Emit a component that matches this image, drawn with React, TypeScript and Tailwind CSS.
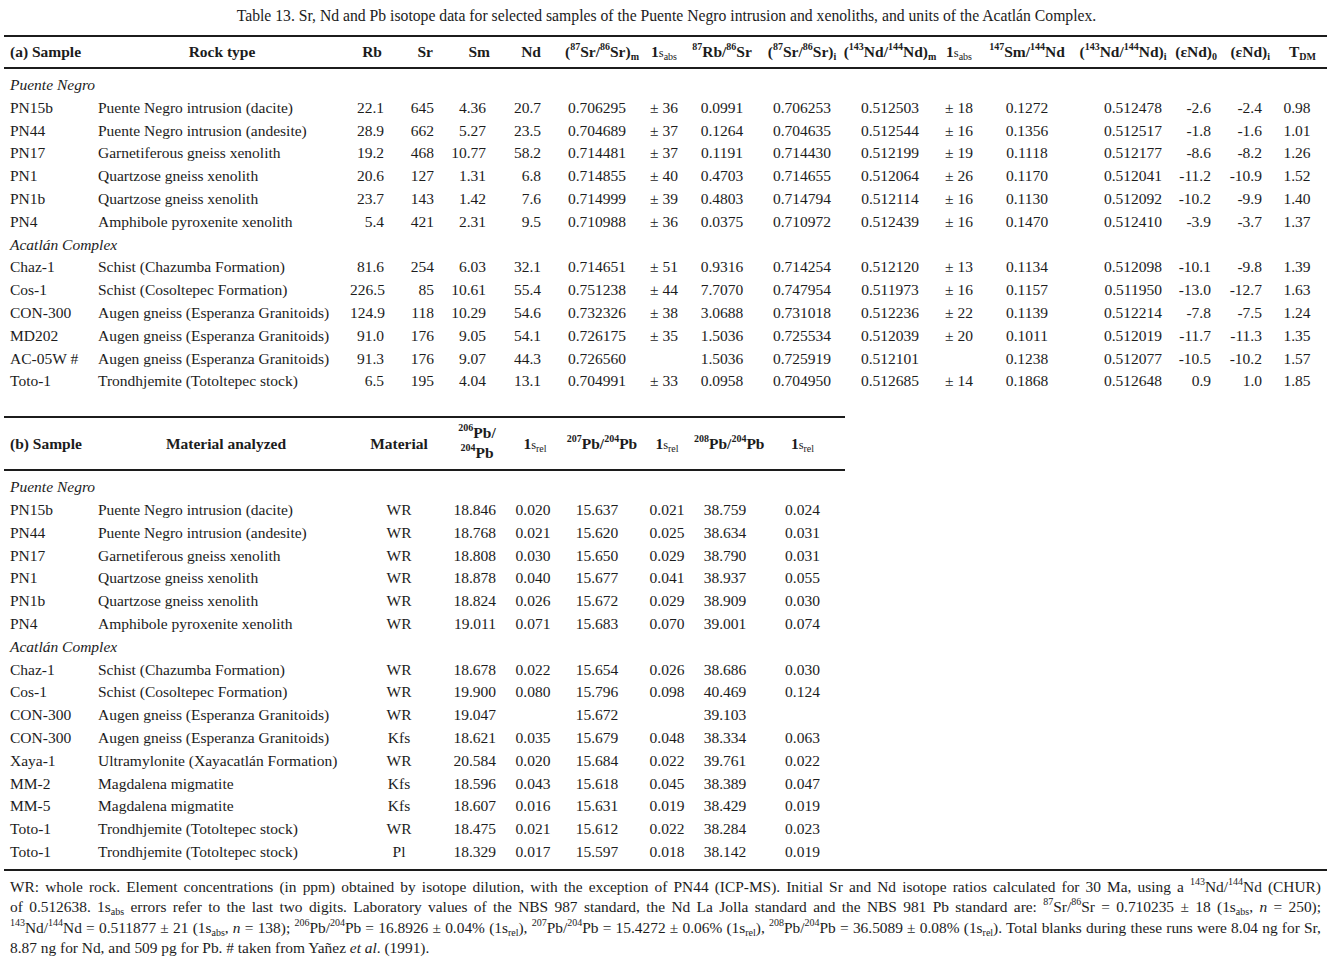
import type { ReactNode } from 'react';

const gridA =
  'grid grid-cols-[90px_256px_40px_50px_52px_56px_98px_36px_80px_80px_96px_42px_94px_98px_48px_54px_53px]';
const gridB = 'grid grid-cols-[90px_264px_82px_62px_62px_76px_54px_66px_85px]';

function Sup({ children }: { children: ReactNode }) {
  return <sup className="text-[10px] font-bold -top-[0.75em]">{children}</sup>;
}

function SupN({ children }: { children: ReactNode }) {
  return <sup className="text-[10px] -top-[0.7em]">{children}</sup>;
}

function Sub({ children }: { children: ReactNode }) {
  return <sub className="text-[10px] -bottom-[0.3em]">{children}</sub>;
}

function OneS({ sub }: { sub: string }) {
  return (
    <span>
      1<span className="font-normal text-[12.5px]">s</span>
      <sub className="text-[10px] font-normal -bottom-[0.3em]">{sub}</sub>
    </span>
  );
}

// header / data alignment for each column of table (a)
const colsA = [
  { h: 'text-left pl-[6px]', d: 'text-left pl-[6px]' },
  { h: 'text-center', d: 'text-left pl-[4px]' },
  { h: 'text-right pr-[8px]', d: 'text-right pr-[6px]' },
  { h: 'text-right pr-[7px]', d: 'text-right pr-[6px]' },
  { h: 'text-right pr-[2px]', d: 'text-right pr-[6px]' },
  { h: 'text-right pr-[7px]', d: 'text-right pr-[7px]' },
  { h: 'text-center pl-[10px]', d: 'text-center' },
  { h: 'text-center', d: 'text-center' },
  { h: 'text-center', d: 'text-center' },
  { h: 'text-center', d: 'text-center' },
  { h: 'text-center', d: 'text-center' },
  { h: 'text-center', d: 'text-center' },
  { h: 'text-center', d: 'text-center' },
  { h: 'text-center', d: 'text-right pr-[10px]' },
  { h: 'text-right pr-[3px]', d: 'text-right pr-[9px]' },
  { h: 'text-right pr-[4px]', d: 'text-right pr-[12px]' },
  { h: 'text-center pl-[4px]', d: 'text-center pr-[7px]' },
];

const colsB = [
  { h: 'text-left pl-[6px]', d: 'text-left pl-[6px]' },
  { h: 'text-center', d: 'text-left pl-[4px]' },
  { h: 'text-center', d: 'text-center' },
  { h: 'text-center pl-[12px]', d: 'text-right pr-[6px]' },
  { h: 'text-center pl-[4px]', d: 'text-center' },
  { h: 'text-center', d: 'text-center pr-[10px]' },
  { h: 'text-center', d: 'text-center' },
  { h: 'text-center', d: 'text-center pr-[4px]' },
  { h: 'text-center', d: 'text-center' },
];

const headA: ReactNode[] = [
  '(a) Sample',
  'Rock type',
  'Rb',
  'Sr',
  'Sm',
  'Nd',
  <span>
    (<Sup>87</Sup>Sr/<Sup>86</Sup>Sr)<Sub>m</Sub>
  </span>,
  <OneS sub="abs" />,
  <span>
    <Sup>87</Sup>Rb/<Sup>86</Sup>Sr
  </span>,
  <span>
    (<Sup>87</Sup>Sr/<Sup>86</Sup>Sr)<Sub>i</Sub>
  </span>,
  <span>
    (<Sup>143</Sup>Nd/<Sup>144</Sup>Nd)<Sub>m</Sub>
  </span>,
  <OneS sub="abs" />,
  <span>
    <Sup>147</Sup>Sm/<Sup>144</Sup>Nd
  </span>,
  <span>
    (<Sup>143</Sup>Nd/<Sup>144</Sup>Nd)<Sub>i</Sub>
  </span>,
  <span>
    (εNd)<Sub>0</Sub>
  </span>,
  <span>
    (εNd)<Sub>i</Sub>
  </span>,
  <span>
    T<Sub>DM</Sub>
  </span>,
];

const headB: ReactNode[] = [
  '(b) Sample',
  'Material analyzed',
  'Material',
  <span className="inline-block leading-[20px]">
    <Sup>206</Sup>Pb/
    <br />
    <Sup>204</Sup>Pb
  </span>,
  <OneS sub="rel" />,
  <span>
    <Sup>207</Sup>Pb/<Sup>204</Sup>Pb
  </span>,
  <OneS sub="rel" />,
  <span>
    <Sup>208</Sup>Pb/<Sup>204</Sup>Pb
  </span>,
  <OneS sub="rel" />,
];

type Row = string[] | { group: string };

const rowsA: Row[] = [
  { group: 'Puente Negro' },
  ['PN15b', 'Puente Negro intrusion (dacite)', '22.1', '645', '4.36', '20.7', '0.706295', '± 36', '0.0991', '0.706253', '0.512503', '± 18', '0.1272', '0.512478', '-2.6', '-2.4', '0.98'],
  ['PN44', 'Puente Negro intrusion (andesite)', '28.9', '662', '5.27', '23.5', '0.704689', '± 37', '0.1264', '0.704635', '0.512544', '± 16', '0.1356', '0.512517', '-1.8', '-1.6', '1.01'],
  ['PN17', 'Garnetiferous gneiss xenolith', '19.2', '468', '10.77', '58.2', '0.714481', '± 37', '0.1191', '0.714430', '0.512199', '± 19', '0.1118', '0.512177', '-8.6', '-8.2', '1.26'],
  ['PN1', 'Quartzose gneiss xenolith', '20.6', '127', '1.31', '6.8', '0.714855', '± 40', '0.4703', '0.714655', '0.512064', '± 26', '0.1170', '0.512041', '-11.2', '-10.9', '1.52'],
  ['PN1b', 'Quartzose gneiss xenolith', '23.7', '143', '1.42', '7.6', '0.714999', '± 39', '0.4803', '0.714794', '0.512114', '± 16', '0.1130', '0.512092', '-10.2', '-9.9', '1.40'],
  ['PN4', 'Amphibole pyroxenite xenolith', '5.4', '421', '2.31', '9.5', '0.710988', '± 36', '0.0375', '0.710972', '0.512439', '± 16', '0.1470', '0.512410', '-3.9', '-3.7', '1.37'],
  { group: 'Acatlán Complex' },
  ['Chaz-1', 'Schist (Chazumba Formation)', '81.6', '254', '6.03', '32.1', '0.714651', '± 51', '0.9316', '0.714254', '0.512120', '± 13', '0.1134', '0.512098', '-10.1', '-9.8', '1.39'],
  ['Cos-1', 'Schist (Cosoltepec Formation)', '226.5', '85', '10.61', '55.4', '0.751238', '± 44', '7.7070', '0.747954', '0.511973', '± 16', '0.1157', '0.511950', '-13.0', '-12.7', '1.63'],
  ['CON-300', 'Augen gneiss (Esperanza Granitoids)', '124.9', '118', '10.29', '54.6', '0.732326', '± 38', '3.0688', '0.731018', '0.512236', '± 22', '0.1139', '0.512214', '-7.8', '-7.5', '1.24'],
  ['MD202', 'Augen gneiss (Esperanza Granitoids)', '91.0', '176', '9.05', '54.1', '0.726175', '± 35', '1.5036', '0.725534', '0.512039', '± 20', '0.1011', '0.512019', '-11.7', '-11.3', '1.35'],
  ['AC-05W #', 'Augen gneiss (Esperanza Granitoids)', '91.3', '176', '9.07', '44.3', '0.726560', '', '1.5036', '0.725919', '0.512101', '', '0.1238', '0.512077', '-10.5', '-10.2', '1.57'],
  ['Toto-1', 'Trondhjemite (Totoltepec stock)', '6.5', '195', '4.04', '13.1', '0.704991', '± 33', '0.0958', '0.704950', '0.512685', '± 14', '0.1868', '0.512648', '0.9', '1.0', '1.85'],
];

const rowsB: Row[] = [
  { group: 'Puente Negro' },
  ['PN15b', 'Puente Negro intrusion (dacite)', 'WR', '18.846', '0.020', '15.637', '0.021', '38.759', '0.024'],
  ['PN44', 'Puente Negro intrusion (andesite)', 'WR', '18.768', '0.021', '15.620', '0.025', '38.634', '0.031'],
  ['PN17', 'Garnetiferous gneiss xenolith', 'WR', '18.808', '0.030', '15.650', '0.029', '38.790', '0.031'],
  ['PN1', 'Quartzose gneiss xenolith', 'WR', '18.878', '0.040', '15.677', '0.041', '38.937', '0.055'],
  ['PN1b', 'Quartzose gneiss xenolith', 'WR', '18.824', '0.026', '15.672', '0.029', '38.909', '0.030'],
  ['PN4', 'Amphibole pyroxenite xenolith', 'WR', '19.011', '0.071', '15.683', '0.070', '39.001', '0.074'],
  { group: 'Acatlán Complex' },
  ['Chaz-1', 'Schist (Chazumba Formation)', 'WR', '18.678', '0.022', '15.654', '0.026', '38.686', '0.030'],
  ['Cos-1', 'Schist (Cosoltepec Formation)', 'WR', '19.900', '0.080', '15.796', '0.098', '40.469', '0.124'],
  ['CON-300', 'Augen gneiss (Esperanza Granitoids)', 'WR', '19.047', '', '15.672', '', '39.103', ''],
  ['CON-300', 'Augen gneiss (Esperanza Granitoids)', 'Kfs', '18.621', '0.035', '15.679', '0.048', '38.334', '0.063'],
  ['Xaya-1', 'Ultramylonite (Xayacatlán Formation)', 'WR', '20.584', '0.020', '15.684', '0.022', '39.761', '0.022'],
  ['MM-2', 'Magdalena migmatite', 'Kfs', '18.596', '0.043', '15.618', '0.045', '38.389', '0.047'],
  ['MM-5', 'Magdalena migmatite', 'Kfs', '18.607', '0.016', '15.631', '0.019', '38.429', '0.019'],
  ['Toto-1', 'Trondhjemite (Totoltepec stock)', 'WR', '18.475', '0.021', '15.612', '0.022', '38.284', '0.023'],
  ['Toto-1', 'Trondhjemite (Totoltepec stock)', 'Pl', '18.329', '0.017', '15.597', '0.018', '38.142', '0.019'],
];

function Body({
  rows,
  grid,
  cols,
}: {
  rows: Row[];
  grid: string;
  cols: { h: string; d: string }[];
}) {
  return (
    <div>
      {rows.map((r, i) =>
        Array.isArray(r) ? (
          <div key={i} className={`${grid} h-[22.8px] leading-[22.8px]`}>
            {r.map((c, j) => (
              <div key={j} className={`whitespace-nowrap ${cols[j].d}`}>
                {c}
              </div>
            ))}
          </div>
        ) : (
          <div key={i} className="h-[22.8px] leading-[22.8px] pl-[6px] italic">
            {r.group}
          </div>
        ),
      )}
    </div>
  );
}

export default function App() {
  return (
    <div className="h-[963px] w-[1333px] overflow-hidden bg-white font-['Liberation_Serif','Times_New_Roman',serif] text-[15.5px] text-[#1c1c1c]">
      <p className="pt-[7px] text-center text-[15.7px] leading-[18px]">
        Table 13. Sr, Nd and Pb isotope data for selected samples of the Puente Negro intrusion
        and xenoliths, and units of the Acatlán Complex.
      </p>

      {/* (a) Sr–Nd */}
      <div className="mx-[4px] mt-[10px] w-[1323px]">
        <div
          className={`${gridA} h-[34px] items-center border-y-2 border-[#1c1c1c] font-bold`}
        >
          {headA.map((h, j) => (
            <div key={j} className={`whitespace-nowrap ${colsA[j].h}`}>
              {h}
            </div>
          ))}
        </div>
        <div className="pt-[5px]">
          <Body rows={rowsA} grid={gridA} cols={colsA} />
        </div>
      </div>

      {/* (b) Pb */}
      <div className="mx-[4px] mt-[23px] w-[1323px]">
        <div className="w-[841px]">
          <div
            className={`${gridB} h-[55px] items-center border-y-2 border-[#1c1c1c] font-bold`}
          >
            {headB.map((h, j) => (
              <div key={j} className={`whitespace-nowrap ${colsB[j].h}`}>
                {h}
              </div>
            ))}
          </div>
          <div className="pt-[5px] pb-[5px]">
            <Body rows={rowsB} grid={gridB} cols={colsB} />
          </div>
        </div>

        <div className="border-t-2 border-[#1c1c1c] px-[6px] pt-[6px] text-[15.4px] leading-[20.5px]">
          <span className="block [text-align-last:justify]">
            WR: whole rock. Element concentrations (in ppm) obtained by isotope dilution, with the
            exception of PN44 (ICP-MS). Initial Sr and Nd isotope ratios calculated for 30 Ma,
            using a <SupN>143</SupN>Nd/<SupN>144</SupN>Nd (CHUR)
          </span>
          <span className="block [text-align-last:justify]">
            of 0.512638. 1s<Sub>abs</Sub> errors refer to the last two digits. Laboratory values of
            the NBS 987 standard, the Nd La Jolla standard and the NBS 981 Pb standard are:{' '}
            <SupN>87</SupN>Sr/<SupN>86</SupN>Sr = 0.710235 ± 18 (1s<Sub>abs</Sub>, <i>n</i> = 250);
          </span>
          <span className="block [text-align-last:justify]">
            <SupN>143</SupN>Nd/<SupN>144</SupN>Nd = 0.511877 ± 21 (1s<Sub>abs</Sub>, <i>n</i> =
            138); <SupN>206</SupN>Pb/<SupN>204</SupN>Pb = 16.8926 ± 0.04% (1s<Sub>rel</Sub>),{' '}
            <SupN>207</SupN>Pb/<SupN>204</SupN>Pb = 15.4272 ± 0.06% (1s<Sub>rel</Sub>),{' '}
            <SupN>208</SupN>Pb/<SupN>204</SupN>Pb = 36.5089 ± 0.08% (1s<Sub>rel</Sub>). Total
            blanks during these runs were 8.04 ng for Sr,
          </span>
          <span className="block">
            8.87 ng for Nd, and 509 pg for Pb. # taken from Yañez <i>et al</i>. (1991).
          </span>
        </div>
      </div>
    </div>
  );
}
